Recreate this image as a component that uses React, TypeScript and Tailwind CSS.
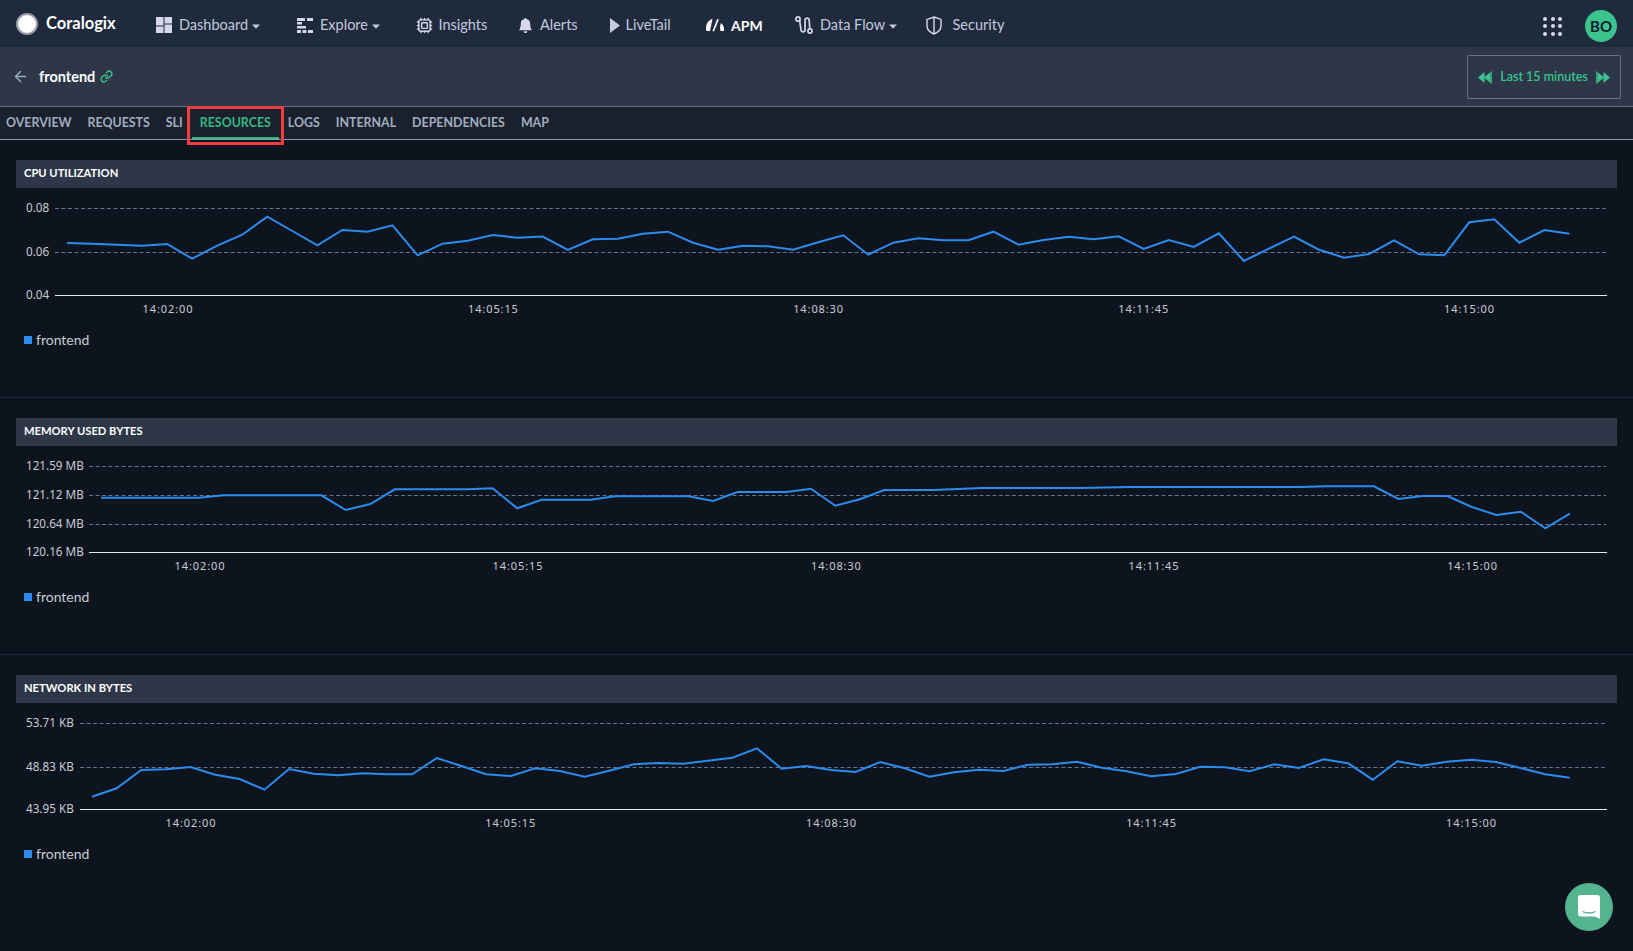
import React from "react";
import { ArrowLeft, Cpu, Link as LinkIcon } from "lucide-react";
import { BsBellFill } from "react-icons/bs";

const cpuYs = [
  243, 243.7, 244.7, 245.7, 244, 258.7, 245.7, 234.7, 216.7, 231, 245.3, 230, 231.7, 225.3, 255.3,
  243.7, 240.7, 235, 237.7, 236.5, 250, 239.3, 238.7, 233.7, 231.7, 242.7, 249.7, 245.7, 246.3,
  249.7, 242.3, 235.3, 254.7, 242.7, 238.3, 240.3, 240.3, 231.7, 244.7, 240, 236.7, 239.3, 236.3,
  249, 240, 247, 233.3, 261, 248.7, 236.7, 249.7, 257.7, 254, 240.3, 254.3, 255.3, 222.3, 219.3,
  242.7, 230, 233.7,
];

const memoryYs = [
  497.7, 497.7, 497.7, 497.7, 497.7, 495.3, 495.3, 495.3, 495.3, 495.3, 510, 504, 489.3, 489.3,
  489.3, 489.3, 488.3, 508.3, 499.8, 499.7, 499.7, 496.3, 496.3, 496.3, 496.3, 501, 492, 492, 492,
  488.7, 505.7, 499.3, 490, 490, 490, 489, 488, 488, 488, 488, 488, 487.5, 487, 487, 487, 487, 487,
  487, 487, 487, 486.3, 486.3, 486.3, 499, 496, 496, 507, 515, 511.7, 528.3, 513.7,
];

const networkYs = [
  796.7, 788.3, 770, 769.3, 767, 774.7, 779, 789.7, 769, 773.7, 775.3, 773.3, 774.3, 774.3, 758,
  766, 774.3, 776, 768.3, 771, 776.7, 770.7, 764.3, 763, 763.7, 760.7, 757.7, 748.3, 768.7, 766,
  770, 772, 762, 768.3, 776.7, 772.3, 769.7, 771, 764.7, 764.3, 761.7, 767.7, 771.3, 776.3, 774,
  766.7, 767.3, 771.3, 764.3, 768, 759.3, 763.3, 779.7, 761.3, 765.7, 761.7, 759.7, 762, 768,
  774.3, 777.7,
];

const times = ["14:02:00", "14:05:15", "14:08:30", "14:11:45", "14:15:00"];

const charts = [
  {
    title: "CPU UTILIZATION",
    top: 188,
    axisX: 55,
    startX: 67,
    step: 25.04,
    ys: cpuYs,
    ticks: [
      { y: 208.5, label: "0.08" },
      { y: 252.5, label: "0.06" },
    ],
    base: { y: 295.5, label: "0.04" },
    timeY: 313,
    timeX: [168, 493.4, 818.6, 1143.8, 1469.5],
    sectionClass: "h-[258px]",
    legendClass: "",
  },
  {
    title: "MEMORY USED BYTES",
    top: 446,
    axisX: 89,
    startX: 101,
    step: 24.48,
    ys: memoryYs,
    ticks: [
      { y: 466.5, label: "121.59 MB" },
      { y: 495.5, label: "121.12 MB" },
      { y: 524.5, label: "120.64 MB" },
    ],
    base: { y: 552.5, label: "120.16 MB" },
    timeY: 570,
    timeX: [200, 518, 836.4, 1154, 1472.6],
    sectionClass: "h-[257px]",
    legendClass: "-mt-[1px]",
  },
  {
    title: "NETWORK IN BYTES",
    top: 703,
    axisX: 80,
    startX: 92,
    step: 24.63,
    ys: networkYs,
    ticks: [
      { y: 723.5, label: "53.71 KB" },
      { y: 767.5, label: "48.83 KB" },
    ],
    base: { y: 809.5, label: "43.95 KB" },
    timeY: 827,
    timeX: [191, 510.7, 831.5, 1151.6, 1471.5],
    sectionClass: "",
    legendClass: "-mt-[1px]",
  },
];

const Caret = () => (
  <svg width="8" height="5" viewBox="0 0 8 5" className="-ml-[3px] mt-[3px] fill-[#c3c9dd]">
    <path d="M0 0.5h8L4 4.8z" />
  </svg>
);

const DashboardIcon = () => (
  <svg width="16" height="16" viewBox="0 0 16 16" className="fill-[#d6d8ea]">
    <rect x="0" y="0" width="7.5" height="8.5" />
    <rect x="8.5" y="0" width="7.5" height="6.5" />
    <rect x="0" y="9.5" width="7.5" height="6.5" />
    <rect x="8.5" y="7.5" width="7.5" height="8.5" />
  </svg>
);

const ExploreIcon = () => (
  <svg width="16" height="16" viewBox="0 0 16 16" className="fill-[#d6d8ea]">
    <rect x="0" y="1" width="8" height="3" />
    <rect x="10" y="1" width="6" height="3" />
    <rect x="0" y="5" width="5" height="2.5" />
    <rect x="0" y="9" width="9" height="2.5" />
    <rect x="0" y="13" width="4" height="3" />
    <rect x="5.5" y="13" width="4" height="3" />
    <rect x="11" y="13" width="5" height="3" />
  </svg>
);

const ApmIcon = () => (
  <svg width="20" height="14" viewBox="0 0 20 14" className="fill-white">
    <path d="M7.5 0.8L5 13H1.5C0 9 1.5 3 7.5 0.8z" />
    <path d="M12.2 1l1.7.6L9 13.4l-1.6-.5z" />
    <path d="M16 5c2.5 2 3.5 5 3 8h-3.5c-.7-3-.5-5.5.5-8z" />
  </svg>
);

const RouteIcon = () => (
  <svg width="18" height="18" viewBox="0 0 18 18" fill="none" className="stroke-[#d6d8ea]" strokeWidth="1.7">
    <circle cx="3" cy="3" r="2.1" />
    <circle cx="15" cy="15" r="2.1" />
    <path d="M4.6 4.2L6 14c.4 2.6 4 2.6 4 0V4c0-2.6 4-2.6 4.2 0l.6 9" />
  </svg>
);

const ShieldIcon = () => (
  <svg width="16" height="19" viewBox="0 0 16 19" fill="none" className="stroke-[#d6d8ea]" strokeWidth="1.4">
    <path d="M8 1l7 2.4v6.4c0 4-3.4 6.8-7 8.2-3.6-1.4-7-4.2-7-8.2V3.4z" />
    <path d="M8 1v17" />
  </svg>
);

const SkipIcon = ({ flip }: { flip?: boolean }) => (
  <svg width="14" height="13" viewBox="0 0 14 13" className={flip ? "-scale-x-100 fill-[#3cc48f]" : "fill-[#3cc48f]"}>
    <path d="M0 6.5L6.5 1v11z" />
    <path d="M6 6.5L12.5 1v11z" />
    <rect x="12.6" y="0.5" width="1.2" height="12" />
  </svg>
);

const navItems = [
  { label: "Dashboard", icon: <DashboardIcon />, width: "w-[141px]", gap: "gap-[7px]", caret: true },
  { label: "Explore", icon: <ExploreIcon />, width: "w-[118.5px]", gap: "gap-[7px]", caret: true },
  { label: "Insights", icon: <Cpu size={17} className="text-[#d6d8ea]" />, width: "w-[102.5px]", gap: "gap-[6px]" },
  { label: "Alerts", icon: <BsBellFill size={15} className="text-[#d6d8ea]" />, width: "w-[91.5px]", gap: "gap-[7px]" },
  {
    label: "LiveTail",
    icon: (
      <svg width="10" height="15" viewBox="0 0 10 15" className="fill-[#c9cbe0]">
        <path d="M0 0l10 7.5L0 15z" />
      </svg>
    ),
    width: "w-[95.5px]",
    gap: "gap-[6px]",
  },
  { label: "APM", icon: <ApmIcon />, width: "w-[90px]", gap: "gap-[6px]", active: true },
  { label: "Data Flow", icon: <RouteIcon />, width: "w-[130.5px]", gap: "gap-[7px]", caret: true },
  { label: "Security", icon: <ShieldIcon />, width: "w-[90px]", gap: "gap-[11px]" },
];

const tabs = ["OVERVIEW", "REQUESTS", "SLI", "RESOURCES", "LOGS", "INTERNAL", "DEPENDENCIES", "MAP"];

const Chart = ({ chart }: { chart: (typeof charts)[number] }) => {
  const points = chart.ys.map((y, i) => `${chart.startX + i * chart.step},${y}`).join(" ");
  return (
    <svg
      viewBox={`0 ${chart.top} 1633 141`}
      className="block h-[141px] w-[1633px] font-['Noto_Sans',sans-serif]"
    >
      {chart.ticks.map((t) => (
        <g key={t.label}>
          <line x1={chart.axisX} x2="1606" y1={t.y} y2={t.y} stroke="#64748f" strokeDasharray="4 2.5" />
          <text x="26" y={t.y + 3} className="fill-[#c8ccd4] text-[11.7px]">
            {t.label}
          </text>
        </g>
      ))}
      <line x1={chart.axisX} x2="1607" y1={chart.base.y} y2={chart.base.y} stroke="#e2e8f0" />
      <text x="26" y={chart.base.y + 3} className="fill-[#c8ccd4] text-[11.7px]">
        {chart.base.label}
      </text>
      {times.map((t, i) => (
        <text
          key={t}
          x={chart.timeX[i]}
          y={chart.timeY}
          textAnchor="middle"
          className="fill-[#c8ccd4] text-[11px] tracking-[0.9px]"
        >
          {t}
        </text>
      ))}
      <polyline points={points} fill="none" stroke="#2b8bef" strokeWidth="2" />
    </svg>
  );
};

export default function App() {
  return (
    <div className="relative flex h-screen w-full flex-col overflow-hidden bg-[#0d141e] font-[Lato,sans-serif] text-[#c3c9dd]">
      <nav className="flex h-[47px] shrink-0 items-center bg-[#1f2a3d] pl-[16px]">
        <div className="flex w-[140px] items-center gap-[8px]">
          <span className="h-[22px] w-[22px] rounded-full border-[2px] border-[#9b9ea6] bg-white" />
          <span className="text-[16.5px] font-bold text-white">Coralogix</span>
        </div>
        {navItems.map((item) => (
          <div key={item.label} className={`flex items-center pt-[3px] ${item.width} ${item.gap}`}>
            {item.icon}
            <span className={item.active ? "text-[14px] font-bold text-white" : "text-[14.5px]"}>{item.label}</span>
            {item.caret && <Caret />}
          </div>
        ))}
        <div className="ml-auto mr-[16px] flex items-center gap-[23px] pt-[5px]">
          <div className="grid grid-cols-3 gap-[3.5px]">
            {[...Array(9)].map((_, i) => (
              <span key={i} className="h-[4px] w-[4px] rounded-full bg-[#d8dce4]" />
            ))}
          </div>
          <span className="flex h-[32px] w-[32px] items-center justify-center rounded-full bg-[#3cc48f] text-[15px] font-bold text-[#0f1b2e]">
            BO
          </span>
        </div>
      </nav>

      <div className="flex h-[60px] shrink-0 items-center border-b border-[#5f7290] bg-[#2d3748] pl-[12px] pr-[12px]">
        <ArrowLeft size={17} className="text-[#a0aec0]" />
        <span className="ml-[10px] text-[14.5px] font-bold text-white">frontend</span>
        <LinkIcon size={13} strokeWidth={2.5} className="ml-[5px] text-[#3cc48f]" />
        <div className="ml-auto flex h-[44px] w-[154px] items-center justify-between rounded-[2px] border border-[#64748b] px-[10px] pt-[2px]">
          <SkipIcon />
          <span className="text-[12.5px] font-semibold text-[#3cc48f]">Last 15 minutes</span>
          <SkipIcon flip />
        </div>
      </div>

      <div className="flex h-[33px] shrink-0 items-stretch border-b border-[#8a99b0] bg-[#1a202c]">
        <div className="-ml-[2px] flex items-stretch">
          {tabs.map((tab) => {
            const active = tab === "RESOURCES";
            return (
              <div
                key={tab}
                className={`relative flex items-center px-2 pt-[1px] text-[12.4px] font-bold ${
                  active ? "mx-[1px] text-[#34b884]" : "text-[#a0aec0]"
                }`}
              >
                {tab}
                {active && (
                  <>
                    <span className="absolute inset-x-0 bottom-0 h-[2px] bg-[#34b884]" />
                    <span className="absolute -inset-x-[5px] -top-[1px] -bottom-[6px] border-[3px] border-[#ef3e3e]" />
                  </>
                )}
              </div>
            );
          })}
        </div>
      </div>

      {charts.map((chart, i) => (
        <section
          key={chart.title}
          className={`shrink-0 pt-5 ${chart.sectionClass} ${i < 2 ? "border-b border-[#1e2a3e]" : ""}`}
        >
          <div className="mx-4 flex h-[28px] items-center bg-[#2d3748] px-2 pb-[1px] text-[11.2px] font-bold text-white">
            {chart.title}
          </div>
          <Chart chart={chart} />
          <div className={`flex h-5 items-center gap-[4px] pl-[24px] text-[14px] text-[#c8ccd4] ${chart.legendClass}`}>
            <span className="mt-[1px] h-2 w-2 bg-[#2b8bef]" />
            frontend
          </div>
        </section>
      ))}

      <div className="absolute bottom-[20px] right-[20px] flex h-[48px] w-[48px] items-center justify-center rounded-full bg-[#54b48f]">
        <svg width="22" height="24" viewBox="0 0 22 24">
          <path
            className="fill-white"
            d="M3 0h16a3 3 0 0 1 3 3v21l-5-2.4H3a3 3 0 0 1-3-3V3a3 3 0 0 1 3-3z"
          />
          <path d="M4.5 16.5c3.5 2 9.5 2 13 0" fill="none" stroke="#54b48f" strokeWidth="1.3" />
        </svg>
      </div>
    </div>
  );
}
